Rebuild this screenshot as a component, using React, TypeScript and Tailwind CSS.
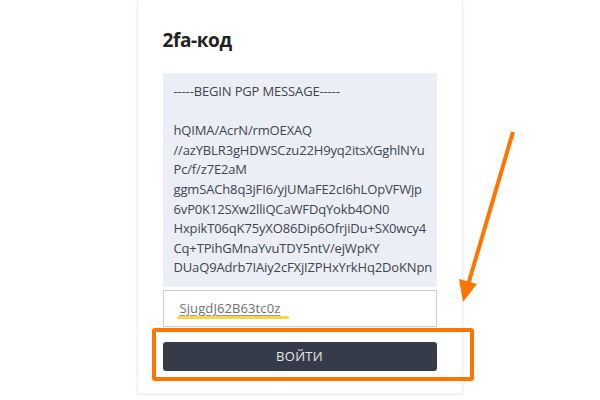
import React from "react";

const lines = [
  "-----BEGIN PGP MESSAGE-----",
  "\u00a0",
  "hQIMA/AcrN/rmOEXAQ",
  "//azYBLR3gHDWSCzu22H9yq2itsXGghlNYu",
  "Pc/f/z7E2aM",
  "ggmSACh8q3jFI6/yjUMaFE2cI6hLOpVFWjp",
  "6vP0K12SXw2lliQCaWFDqYokb4ON0",
  "HxpikT06qK75yXO86Dip6OfrjiDu+SX0wcy4",
  "Cq+TPihGMnaYvuTDY5ntV/ejWpKY",
  "DUaQ9Adrb7IAiy2cFXjIZPHxYrkHq2DoKNpn",
];

export default function App() {
  return (
    <div
      className="relative w-[600px] h-[400px] overflow-hidden bg-white flex justify-center"
      style={{ fontFamily: '"Open Sans", "Noto Sans", sans-serif' }}
    >
      <div className="w-[326px] h-[393px] ml-[-1px] bg-white border-x border-[#efefef] shadow-[0_2px_3px_rgba(0,0,0,0.08)] px-[25px] pt-[26px] flex flex-col">
        <h1 className="text-[19px] leading-[28px] font-bold text-[#222] tracking-[-0.4px]">
          2fa-код
        </h1>
        <div className="mt-[19px] h-[214px] bg-[#eceef6] pl-[11px] pt-[9px] overflow-hidden">
          {lines.map((l, i) => (
            <div
              key={i}
              className="whitespace-nowrap text-[13px] leading-[19.6px] text-[#40454f] tracking-[-0.15px]"
            >
              {l}
            </div>
          ))}
        </div>
        <div className="mt-[3px] h-[37px] border border-[#cfcfcf] bg-white flex items-center pl-[16px]">
          <span className="relative text-[13px] text-[#707070] underline decoration-[#9a9a9a] underline-offset-[2px] tracking-[0.1px]">
            SjugdJ62B63tc0z
            <span className="absolute left-[-3px] right-[-9px] top-[17px] h-[3px] rounded-full bg-[#f7d64a]" />
          </span>
        </div>
        <button className="mt-[15px] h-[29px] rounded-[3px] bg-[#353b48] text-[#e6e7ea] text-[13px] tracking-[0.3px]">
          ВОЙТИ
        </button>
      </div>

      <div className="absolute left-[152px] top-[328px] w-[322px] h-[53px] border-[4px] border-[#ff7500] rounded-[3px]" />

      <svg
        className="absolute left-0 top-0"
        width="600"
        height="400"
        viewBox="0 0 600 400"
      >
        <line x1="513" y1="132" x2="468" y2="285" stroke="#ff7500" strokeWidth="4" strokeLinecap="butt" />
        <polygon points="463,302 459,279 477,284" fill="#ff7500" />
      </svg>
    </div>
  );
}
